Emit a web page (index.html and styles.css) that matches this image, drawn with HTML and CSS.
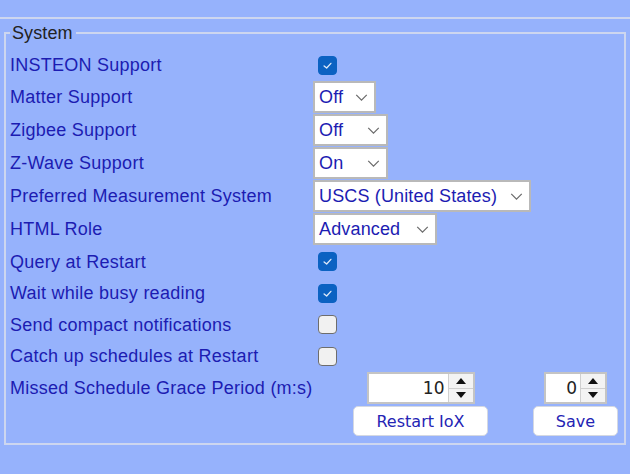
FILE: index.html
```html
<!DOCTYPE html>
<html>
<head>
<meta charset="utf-8">
<link rel="stylesheet" href="styles.css">
</head>
<body>
<div class="topline"></div>
<fieldset class="panel">
  <legend>System</legend>

  <div class="row row-cb first">
    <span class="label">INSTEON Support</span>
    <span class="cb checked"><svg viewBox="0 0 20 20"><path d="M6 10.5 L9 13 L14 7.5" /></svg></span>
  </div>
  <div class="row row-sel">
    <span class="label">Matter Support</span>
    <div class="select w63"><span>Off</span><svg class="chev" viewBox="0 0 14 8"><path d="M1 1 L7 7 L13 1"/></svg></div>
  </div>
  <div class="row row-sel">
    <span class="label">Zigbee Support</span>
    <div class="select w75"><span>Off</span><svg class="chev" viewBox="0 0 14 8"><path d="M1 1 L7 7 L13 1"/></svg></div>
  </div>
  <div class="row row-sel">
    <span class="label">Z-Wave Support</span>
    <div class="select w75"><span>On</span><svg class="chev" viewBox="0 0 14 8"><path d="M1 1 L7 7 L13 1"/></svg></div>
  </div>
  <div class="row row-sel">
    <span class="label">Preferred Measurement System</span>
    <div class="select w218"><span>USCS (United States)</span><svg class="chev" viewBox="0 0 14 8"><path d="M1 1 L7 7 L13 1"/></svg></div>
  </div>
  <div class="row row-sel">
    <span class="label">HTML Role</span>
    <div class="select w124"><span>Advanced</span><svg class="chev" viewBox="0 0 14 8"><path d="M1 1 L7 7 L13 1"/></svg></div>
  </div>
  <div class="row row-cb">
    <span class="label">Query at Restart</span>
    <span class="cb checked"><svg viewBox="0 0 20 20"><path d="M6 10.5 L9 13 L14 7.5" /></svg></span>
  </div>
  <div class="row row-cb tall">
    <span class="label">Wait while busy reading</span>
    <span class="cb checked"><svg viewBox="0 0 20 20"><path d="M6 10.5 L9 13 L14 7.5" /></svg></span>
  </div>
  <div class="row row-cb">
    <span class="label">Send compact notifications</span>
    <span class="cb"></span>
  </div>
  <div class="row row-cb tall">
    <span class="label">Catch up schedules at Restart</span>
    <span class="cb"></span>
  </div>

  <div class="row row-missed">
    <span class="label">Missed Schedule Grace Period (m:s)</span>
    <div class="group g1">
      <div class="num w108"><span class="val">10</span><span class="spin"><span class="up"></span><span class="down"></span></span></div>
      <button class="btn w135">Restart IoX</button>
    </div>
    <div class="group g2">
      <div class="num w63"><span class="val">0</span><span class="spin"><span class="up"></span><span class="down"></span></span></div>
      <button class="btn w85">Save</button>
    </div>
  </div>
</fieldset>
</body>
</html>
```
FILE: styles.css
```css
html, body {
  margin: 0;
  padding: 0;
  background: #96b2fc;
  font-family: "Liberation Sans", Arial, sans-serif;
  font-size: 18px;
}
.topline {
  height: 17px;
  border-bottom: 2px solid #cdd6ef;
}
.panel {
  margin: 5px 4px 0 4px;
  border: 2px solid #cdd6ef;
  padding: 7px 4px 7px 4px;
  min-width: 0;
}
.panel legend {
  padding: 0 3px 0 2px;
  margin-left: 0;
  color: #222;
  line-height: 18px;
  font-size: 18px;
  letter-spacing: 0.1px;
}
.row {
  display: flex;
  align-items: center;
}
.row-cb { height: 31px; }
.row-cb.tall { height: 32px; }
.row-cb.first { height: 32px; }
.row-sel { height: 33px; align-items: flex-start; }
.row-sel .label { line-height: 32px; }
.label {
  width: 303px;
  flex: none;
  color: #1c1cb2;
  white-space: nowrap;
  letter-spacing: 0.25px;
}
.row-cb .label { padding-top: 1px; }
.cb {
  width: 19px;
  height: 19px;
  margin-left: 5px;
  box-sizing: border-box;
  border-radius: 4px;
  border: 1.5px solid #6d6d6d;
  background: #f1f1f1;
  display: flex;
}
.cb.checked {
  background: #0b62c2;
  border-color: #0b62c2;
}
.cb svg {
  width: 100%;
  height: 100%;
}
.cb svg path {
  fill: none;
  stroke: #dce8f8;
  stroke-width: 1.6;
  stroke-linecap: round;
  stroke-linejoin: round;
}
.select {
  height: 32px;
  box-sizing: border-box;
  border: 2px solid #b9b9b9;
  background: #fff;
  display: flex;
  align-items: center;
  justify-content: space-between;
  padding: 0 6px 0 4px;
  color: #1c1cb2;
  letter-spacing: 0.15px;
}
.w63 { width: 63px; }
.w75 { width: 75px; }
.w218 { width: 218px; }
.w124 { width: 124px; }
.w108 { width: 108px; }
.w135 { width: 135px; }
.w85 { width: 85px; }
.chev {
  width: 13px;
  height: 7px;
  flex: none;
}
.chev path {
  fill: none;
  stroke: #6a6a6a;
  stroke-width: 1.4;
}
.row-missed {
  align-items: flex-start;
}
.row-missed .label {
  line-height: 33px;
  height: 33px;
}
.group {
  display: flex;
  flex-direction: column;
  align-items: center;
}
.g1 { margin-left: 40px; }
.g2 { margin-left: 45px; }
.num {
  height: 32px;
  box-sizing: border-box;
  border: 2px solid #c4c4c4;
  background: #fff;
  display: flex;
  align-items: stretch;
  font-family: "DejaVu Sans", sans-serif;
  font-size: 17px;
  color: #222;
}
.num .val {
  flex: 1;
  text-align: right;
  line-height: 28px;
  padding-right: 3px;
}
.spin {
  width: 24px;
  flex: none;
  display: flex;
  flex-direction: column;
  background: #f3f3f3;
  border-left: 1px solid #d0d0d0;
}
.spin span {
  flex: 1;
  display: flex;
  align-items: center;
  justify-content: center;
  border-bottom: 1px solid #d0d0d0;
}
.spin span.down { border-bottom: none; }
.spin .up::after {
  content: "";
  border-left: 5px solid transparent;
  border-right: 5px solid transparent;
  border-bottom: 6px solid #111;
}
.spin .down::after {
  content: "";
  border-left: 5px solid transparent;
  border-right: 5px solid transparent;
  border-top: 6px solid #111;
}
.btn {
  margin-top: 2px;
  height: 30px;
  box-sizing: border-box;
  border: 1px solid #d4d8e2;
  border-radius: 5px;
  background: #fff;
  color: #2424b4;
  font-family: "DejaVu Sans", sans-serif;
  font-size: 16px;
  padding: 0;
}
```
